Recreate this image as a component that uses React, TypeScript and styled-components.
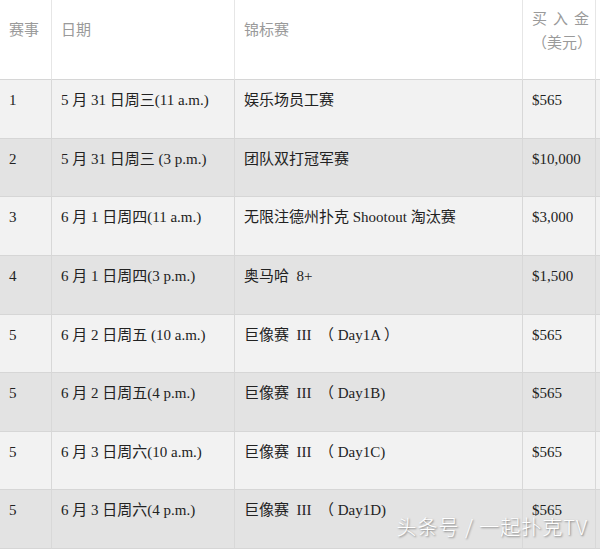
import React from 'react'
import styled, { createGlobalStyle } from 'styled-components'

type Row = {
  no: string
  date: string
  event: string
  buyIn: string
}

const rows: Row[] = [
  { no: '1', date: '5 月 31 日周三(11 a.m.)', event: '娱乐场员工赛', buyIn: '$565' },
  { no: '2', date: '5 月 31 日周三 (3 p.m.)', event: '团队双打冠军赛', buyIn: '$10,000' },
  { no: '3', date: '6 月 1 日周四(11 a.m.)', event: '无限注德州扑克 Shootout 淘汰赛', buyIn: '$3,000' },
  { no: '4', date: '6 月 1 日周四(3 p.m.)', event: '奥马哈  8+', buyIn: '$1,500' },
  { no: '5', date: '6 月 2 日周五 (10 a.m.)', event: '巨像赛  III  （ Day1A ）', buyIn: '$565' },
  { no: '5', date: '6 月 2 日周五(4 p.m.)', event: '巨像赛  III  （ Day1B)', buyIn: '$565' },
  { no: '5', date: '6 月 3 日周六(10 a.m.)', event: '巨像赛  III  （ Day1C)', buyIn: '$565' },
  { no: '5', date: '6 月 3 日周六(4 p.m.)', event: '巨像赛  III  （ Day1D)', buyIn: '$565' },
]

const GlobalStyle = createGlobalStyle`
  html, body {
    margin: 0;
    padding: 0;
    background: #ffffff;
  }
  body {
    font-family: "Liberation Serif", "Noto Sans CJK SC", serif;
  }
`

const Page = styled.div`
  position: relative;
  width: 600px;
  height: 549px;
  overflow: hidden;
  background: #e3e3e3;
`

const Table = styled.div`
  display: grid;
  grid-template-columns: 52px 183px 288px 73px 4px;
  grid-template-rows: 80px repeat(8, 1fr);
  width: 600px;
  height: 549px;
`

const Cell = styled.div<{ $shade: 'head' | 'light' | 'dark'; $last?: boolean }>`
  box-sizing: border-box;
  padding: 10px 0 0 9px;
  font-size: 15px;
  line-height: 20px;
  color: #222222;
  white-space: pre;
  background: ${(p) =>
    p.$shade === 'head' ? '#ffffff' : p.$shade === 'light' ? '#f2f2f2' : '#e3e3e3'};
  border-right: 1px solid ${(p) => (p.$shade === 'head' ? '#e6e6e6' : '#d8d8d8')};
  border-bottom: 1px solid #d6d6d6;
  ${(p) => p.$last && 'border-right: none;'}
`

const HeadCell = styled(Cell)`
  padding-top: 20px;
  color: #9a9a9a;
`

const BuyInHead = styled(Cell)`
  padding: 7px 0 0 9px;
  color: #9a9a9a;
  line-height: 24px;
`

const Spaced = styled.div`
  letter-spacing: 6px;
`

const Watermark = styled.div`
  position: absolute;
  right: 12px;
  bottom: 8px;
  font-family: "Noto Sans CJK SC", sans-serif;
  font-size: 20px;
  font-weight: 300;
  letter-spacing: 1px;
  color: #ffffff;
  text-shadow: 1px 1px 2px rgba(0, 0, 0, 0.45);
`

export default function App() {
  return (
    <Page>
      <GlobalStyle />
      <Table>
        <HeadCell $shade="head">赛事</HeadCell>
        <HeadCell $shade="head">日期</HeadCell>
        <HeadCell $shade="head">锦标赛</HeadCell>
        <BuyInHead $shade="head">
          <Spaced>买入金</Spaced>
          <div>（美元）</div>
        </BuyInHead>
        <Cell $shade="head" $last />
        {rows.map((row, i) => {
          const shade = i % 2 === 0 ? 'light' : 'dark'
          return (
            <React.Fragment key={i}>
              <Cell $shade={shade}>{row.no}</Cell>
              <Cell $shade={shade}>{row.date}</Cell>
              <Cell $shade={shade}>{row.event}</Cell>
              <Cell $shade={shade}>{row.buyIn}</Cell>
              <Cell $shade={shade} $last />
            </React.Fragment>
          )
        })}
      </Table>
      <Watermark>头条号 / 一起扑克TV</Watermark>
    </Page>
  )
}
